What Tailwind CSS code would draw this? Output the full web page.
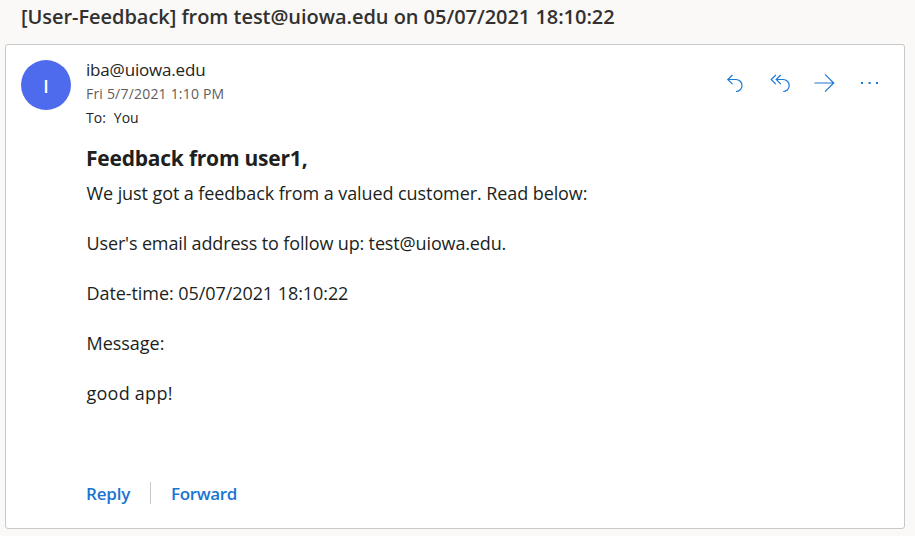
<!DOCTYPE html>
<html lang="en">
<head>
<meta charset="utf-8">
<title>Mail</title>
<script src="https://cdn.jsdelivr.net/npm/@tailwindcss/browser@4"></script>
</head>
<body class="bg-[#faf9f8] font-['Open_Sans',sans-serif] text-[#252423]">
<div class="flex h-[536px] w-[915px] flex-col overflow-hidden">
  <h1 class="h-11 shrink-0 whitespace-nowrap pl-[21px] text-[20px] font-semibold leading-[33px] tracking-[-0.045px] text-[#323130]">[User-Feedback] from test@uiowa.edu on 05/07/2021 18:10:22</h1>
  <main class="ml-[5px] flex h-[485px] w-[900px] rounded-[3px] border border-[#c8c8c8] bg-white pl-[15px] pt-[15px]">
    <div class="flex size-[50px] shrink-0 items-center justify-center rounded-full bg-[#4f6bed] pt-0.5 text-[18px] font-semibold text-white">I</div>
    <div class="ml-[15px] flex w-[818px] flex-col whitespace-nowrap">
      <header class="flex justify-between">
        <div>
          <div class="h-[21px] text-[17px] leading-[20px] tracking-[-0.18px]">iba@uiowa.edu</div>
          <div class="h-6 text-[14px] leading-[26px] tracking-[0.2px] text-[#605e5c]">Fri 5/7/2021 1:10 PM</div>
          <div class="flex h-6 gap-2 text-[14px] leading-[26px]"><span class="font-medium">To:</span><span>You</span></div>
        </div>
        <nav class="mr-[23px] mt-[10px] flex gap-[23px] text-[#1a78d6]">
          <svg class="h-[26px] w-[22px]" viewBox="0 0 22 26" fill="none" stroke="currentColor" stroke-width="1.2"><path d="M8.5 5 3.8 9.5l4.7 4.7M3.8 9.5h8.2a6 6 0 0 1 0 12"/></svg>
          <svg class="h-[26px] w-[22px]" viewBox="0 0 22 26" fill="none" stroke="currentColor" stroke-width="1.2"><path d="M6.8 5 2.2 9.5l4.6 4.7M11.8 5 7.2 9.5l4.6 4.7M7.2 9.5h7a6 6 0 0 1 0 12"/></svg>
          <svg class="h-[26px] w-[22px]" viewBox="0 0 22 26" fill="none" stroke="currentColor" stroke-width="1.2"><path d="M.5 13h19M11 4.3l8.7 8.7L11 21.7"/></svg>
          <svg class="h-[26px] w-[22px]" viewBox="0 0 22 26" fill="currentColor"><path d="M2 12h2v2H2zM9.6 12h2v2h-2zM17 12h2v2h-2z"/></svg>
        </nav>
      </header>
      <h2 class="mt-[13px] h-8 text-[21px] font-bold leading-8 tracking-[-0.22px] text-[#201f1e]">Feedback from user1,</h2>
      <div class="mt-[7px] flex flex-col gap-[25px] pl-[0.5px] text-[18px] leading-[25px] text-[#201f1e]">
        <p class="tracking-[-0.085px]">We just got a feedback from a valued customer. Read below:</p>
        <p class="tracking-[-0.14px]">User's email address to follow up: test@uiowa.edu.</p>
        <p class="tracking-[-0.07px]">Date-time: 05/07/2021 18:10:22</p>
        <p class="tracking-[-0.03px]">Message:</p>
        <p class="tracking-[0.25px]">good app!</p>
      </div>
      <footer class="mt-[75px] flex h-6 items-center text-[17px] font-semibold leading-6 text-[#1a74d2]"><span class="w-16 pt-px tracking-[-0.2px]">Reply</span><i class="h-[22px] w-px bg-[#c8c8c8]"></i><span class="ml-5 pt-px tracking-[-0.35px]">Forward</span></footer>
    </div>
  </main>
</div>
</body>
</html>
